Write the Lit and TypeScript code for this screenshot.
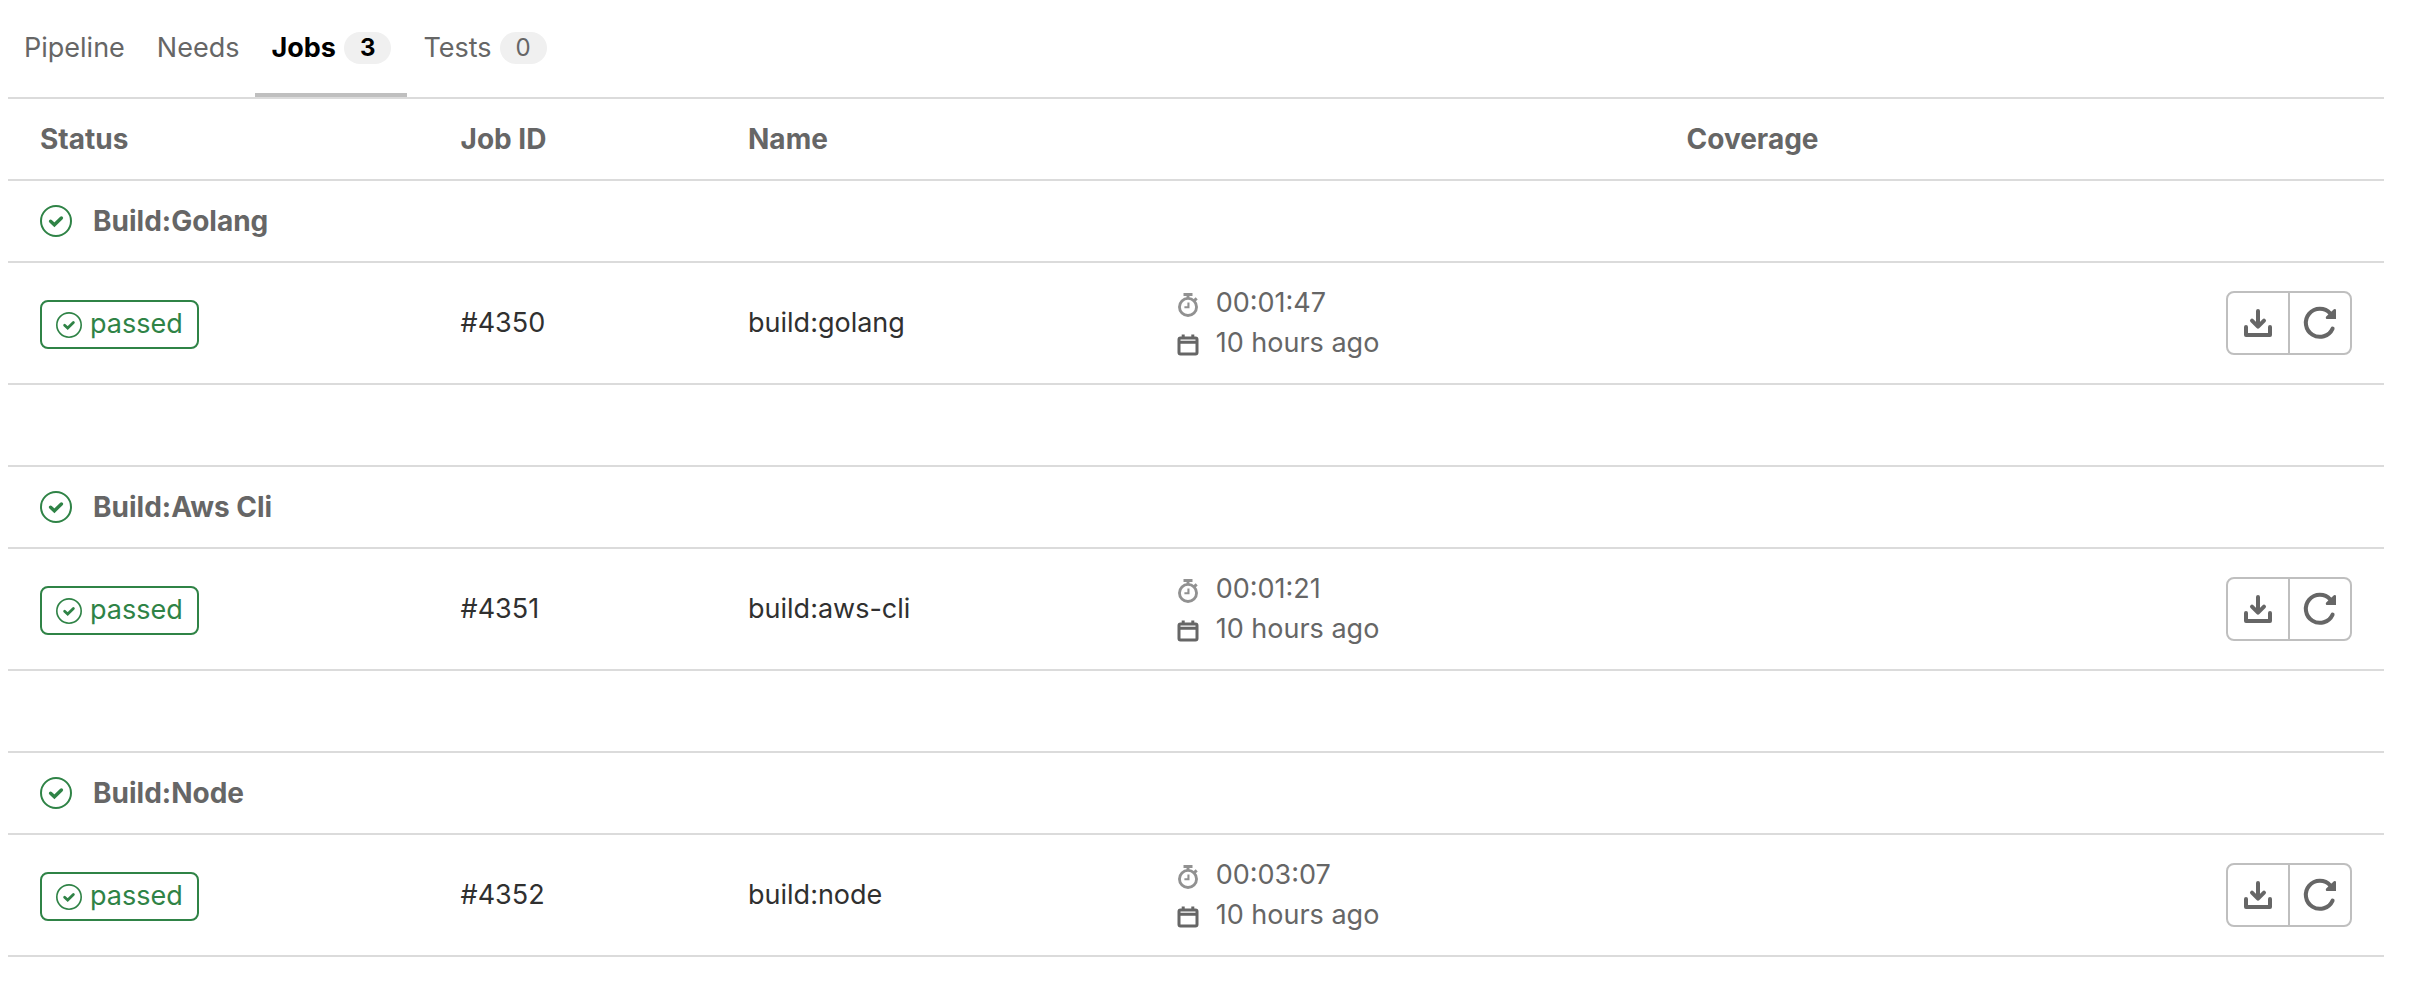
import { LitElement, html, css, svg } from "lit";
import { customElement, property, state } from "lit/decorators.js";
import { classMap } from "lit/directives/class-map.js";

interface Job {
  stage: string;
  id: string;
  name: string;
  duration: string;
  finished: string;
}

const JOBS: Job[] = [
  { stage: "Build:Golang", id: "#4350", name: "build:golang", duration: "00:01:47", finished: "10 hours ago" },
  { stage: "Build:Aws Cli", id: "#4351", name: "build:aws-cli", duration: "00:01:21", finished: "10 hours ago" },
  { stage: "Build:Node", id: "#4352", name: "build:node", duration: "00:03:07", finished: "10 hours ago" },
];

const TABS: { label: string; count?: number }[] = [
  { label: "Pipeline" },
  { label: "Needs" },
  { label: "Jobs", count: 3 },
  { label: "Tests", count: 0 },
];

const GLYPHS = {
  success: svg`
    <circle cx="8" cy="8" r="7.5" fill="none" stroke="currentColor"></circle>
    <path d="M5.3 8.1 7.2 9.9 10.7 6.5" fill="none" stroke="currentColor" stroke-width="1.7" stroke-linecap="round"></path>`,
  timer: svg`
    <g fill="none" stroke="currentColor" stroke-width="1.9">
      <circle cx="8" cy="9.3" r="5.7"></circle>
      <path d="M8.3 6.3v3.2H5.6" stroke-width="1.4"></path>
      <path d="M5 1h6" stroke-width="2"></path>
      <path d="M8 1.5v2"></path>
      <path d="M12 5.2l1.8-1.6" stroke-width="2"></path>
    </g>`,
  calendar: svg`
    <g fill="none" stroke="currentColor" stroke-width="2">
      <rect x="2" y="3.4" width="12" height="10.6" rx="1"></rect>
      <path d="M4.8 1v3M11.2 1v3M2 6.2h12"></path>
    </g>`,
  download: svg`
    <g fill="none" stroke="currentColor" stroke-width="2" stroke-linecap="round" stroke-linejoin="round">
      <path d="M8 2v7.5M5 6.8l3 3 3-3M2 10v4h12v-4"></path>
    </g>`,
  retry: svg`
    <path d="M14.3 10.8A7 7 0 1 1 13.2 3.3" fill="none" stroke="currentColor" stroke-width="2" stroke-linecap="round"></path>
    <path d="M16 1.4V6h-4.4a.7.7 0 0 1-.5-1.2l3.7-3.6a.7.7 0 0 1 1.2.2z" fill="currentColor"></path>`,
};

@customElement("ui-icon")
class UiIcon extends LitElement {
  @property() name: keyof typeof GLYPHS = "success";

  static styles = css`
    :host { display: inline-flex; flex: none; width: 24px; height: 24px; }
    .glyph { display: block; width: 100%; height: 100%; overflow: visible; }
  `;

  render() {
    return html`<svg class="glyph" viewBox="0 0 16 16" aria-hidden="true">${GLYPHS[this.name]}</svg>`;
  }
}

@customElement("app-root")
class AppRoot extends LitElement {
  @state() private active = "Jobs";

  static styles = css`
    :host {
      display: block;
      padding: 0 32px 0 8px;
      background: #fff;
      color: #303030;
      font-family: Inter, "Liberation Sans", sans-serif;
      font-size: 27px;
      line-height: 40px;
    }
    .tabs { display: flex; border-bottom: 2px solid #dbdbdb; }
    .tab {
      display: flex;
      align-items: center;
      gap: 8px;
      padding: 28px 16px 25px;
      border: 0;
      border-bottom: 4px solid transparent;
      background: none;
      color: #666;
      font: inherit;
      cursor: pointer;
    }
    .tab.active { color: #000; font-weight: 700; border-color: #bfbfbf; }
    .count {
      padding: 0 16px;
      border-radius: 16px;
      background: #f0f0f0;
      font-size: 24px;
      line-height: 32px;
    }
    .jobs { width: 100%; border-collapse: separate; border-spacing: 0; table-layout: fixed; }
    .status-col { width: 17.7%; }
    .id-col { width: 12.1%; }
    .name-col { width: 18%; }
    .time-col { width: 21.5%; }
    .jobs th, .jobs td {
      height: 40px;
      padding: 20px 32px;
      border-bottom: 2px solid #dbdbdb;
      text-align: left;
      vertical-align: middle;
    }
    .jobs th { color: #666; font-size: 28px; font-weight: 700; }
    .stage { display: flex; align-items: center; gap: 21px; }
    .stage-icon { width: 32px; height: 32px; color: #2f8346; }
    .badge {
      display: inline-flex;
      align-items: center;
      gap: 8px;
      height: 45px;
      margin-top: 2px;
      padding: 0 14px;
      border: 2px solid #2f8346;
      border-radius: 8px;
      color: #2f8346;
      text-decoration: none;
      vertical-align: middle;
    }
    .badge-icon { width: 26px; height: 26px; padding-top: 2px; }
    .job-link { color: inherit; text-decoration: none; }
    .time { display: flex; align-items: center; gap: 16px; color: #666; }
    .time-icon { padding-top: 4px; }
    .timer { color: #919191; }
    .actions { display: flex; justify-content: flex-end; }
    .action {
      display: flex;
      align-items: center;
      justify-content: center;
      width: 64px;
      height: 64px;
      padding: 0;
      border: 2px solid #bfbfbf;
      background: #fff;
      color: #666;
      cursor: pointer;
    }
    .action:first-child { border-radius: 8px 0 0 8px; }
    .action:last-child { margin-left: -2px; border-radius: 0 8px 8px 0; }
    .action-icon { width: 32px; height: 32px; }
  `;

  private renderJob(job: Job, index: number) {
    return html`
      ${index ? html`<tr><td colspan="6"></td></tr>` : ""}
      <tr>
        <th colspan="6" scope="rowgroup">
          <div class="stage"><ui-icon class="stage-icon" name="success"></ui-icon>${job.stage}</div>
        </th>
      </tr>
      <tr>
        <td><a class="badge" href="#"><ui-icon class="badge-icon" name="success"></ui-icon>passed</a></td>
        <td><a class="job-link" href="#">${job.id}</a></td>
        <td>${job.name}</td>
        <td>
          <div class="time"><ui-icon class="time-icon timer" name="timer"></ui-icon>${job.duration}</div>
          <div class="time"><ui-icon class="time-icon" name="calendar"></ui-icon>${job.finished}</div>
        </td>
        <td></td>
        <td>
          <div class="actions">
            <button class="action" aria-label="Download artifacts"><ui-icon class="action-icon" name="download"></ui-icon></button>
            <button class="action" aria-label="Retry"><ui-icon class="action-icon" name="retry"></ui-icon></button>
          </div>
        </td>
      </tr>`;
  }

  render() {
    return html`
      <div class="tabs" role="tablist">
        ${TABS.map((tab) => html`
          <button
            class=${classMap({ tab: true, active: tab.label === this.active })}
            role="tab"
            aria-selected=${tab.label === this.active}
            @click=${() => (this.active = tab.label)}
          >${tab.label}${tab.count === undefined ? "" : html`<span class="count">${tab.count}</span>`}</button>`)}
      </div>
      <table class="jobs">
        <colgroup>
          <col class="status-col"><col class="id-col"><col class="name-col"><col class="time-col"><col><col>
        </colgroup>
        <thead>
          <tr>
            <th scope="col">Status</th>
            <th scope="col">Job ID</th>
            <th scope="col">Name</th>
            <th></th>
            <th scope="col">Coverage</th>
            <th></th>
          </tr>
        </thead>
        <tbody>${JOBS.map((job, index) => this.renderJob(job, index))}</tbody>
      </table>`;
  }
}
